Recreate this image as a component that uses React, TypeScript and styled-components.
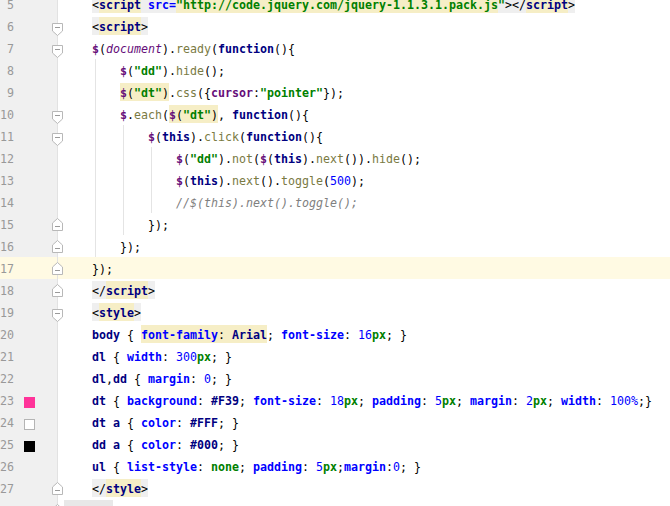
import React from 'react';
import styled, { createGlobalStyle, css } from 'styled-components';

const GlobalStyle = createGlobalStyle`
  html, body {
    margin: 0;
    padding: 0;
    background: #ffffff;
    overflow: hidden;
  }
  body {
    width: 670px;
    height: 506px;
  }
`;

type Kind =
  | 'plain'
  | 'bracket'
  | 'tag'
  | 'attr'
  | 'str'
  | 'dollar'
  | 'docVar'
  | 'method'
  | 'kw'
  | 'num'
  | 'comment'
  | 'key'
  | 'sel'
  | 'prop'
  | 'val'
  | 'unit';

type Bg = 'none' | 'gray' | 'yellow';

type Token = { t: string; k?: Kind; bg?: Bg };

type Fold = 'start' | 'end' | undefined;

type LineData = {
  n: number;
  tokens: Token[];
  fold?: Fold;
  swatch?: string;
  guides?: number[];
  active?: boolean;
};

const kindStyles: Record<Kind, ReturnType<typeof css>> = {
  plain: css`color: #000000;`,
  bracket: css`color: #000000;`,
  tag: css`color: #000080; font-weight: bold;`,
  attr: css`color: #0000ff; font-weight: bold;`,
  str: css`color: #008000; font-weight: bold;`,
  dollar: css`color: #660e7a; font-weight: bold;`,
  docVar: css`color: #660e7a; font-style: italic;`,
  method: css`color: #7a7a43;`,
  kw: css`color: #000080; font-weight: bold;`,
  num: css`color: #0000ff;`,
  comment: css`color: #808080; font-style: italic;`,
  key: css`color: #660e7a; font-weight: bold;`,
  sel: css`color: #000080; font-weight: bold;`,
  prop: css`color: #0000ff; font-weight: bold;`,
  val: css`color: #000080; font-weight: bold;`,
  unit: css`color: #008000; font-weight: bold;`,
};

const bgColors: Record<Bg, string> = {
  none: 'transparent',
  gray: '#efefef',
  yellow: '#f6eec6',
};

const Editor = styled.div`
  display: flex;
  flex-direction: column;
  margin-top: -7px;
  font-family: 'DejaVu Sans Mono', 'Liberation Mono', monospace;
  font-size: 11.63px;
`;

const Row = styled.div<{ $active?: boolean }>`
  display: flex;
  height: 22px;
  background: ${(p) => (p.$active ? '#fffae3' : 'transparent')};
`;

const Gutter = styled.div<{ $active?: boolean }>`
  display: flex;
  align-items: flex-start;
  width: 52px;
  flex-shrink: 0;
  background: ${(p) => (p.$active ? 'transparent' : '#f0f0f0')};
`;

const LineNo = styled.span`
  width: 14px;
  padding-top: 2px;
  line-height: 20px;
  text-align: right;
  color: #999999;
`;

const Swatch = styled.span<{ $color: string }>`
  width: 9px;
  height: 9px;
  margin-left: 10px;
  margin-top: 8px;
  background: ${(p) => p.$color};
  border: 1px solid ${(p) => (p.$color === '#ffffff' ? '#b4b4b4' : p.$color)};
`;

const FoldSlot = styled.div<{ $active?: boolean }>`
  width: 11px;
  flex-shrink: 0;
  background: ${(p) =>
    p.$active
      ? 'linear-gradient(to right, transparent 5px, #e2e2e2 5px, #e2e2e2 6px, transparent 6px)'
      : 'linear-gradient(to right, #f0f0f0 5px, #e2e2e2 5px, #e2e2e2 6px, #ffffff 6px)'};
`;

const FoldIcon = styled.svg<{ $end?: boolean }>`
  display: block;
  margin-top: ${(p) => (p.$end ? '5px' : '8px')};
`;

const Code = styled.div`
  position: relative;
  flex: 1;
  padding-left: 29px;
  padding-top: 2px;
  line-height: 20px;
  white-space: pre;
`;

const Guide = styled.span`
  position: absolute;
  top: 0;
  bottom: 0;
  width: 1px;
  background: #e4e4e4;
`;

const Tok = styled.span<{ $kind: Kind; $bg: Bg }>`
  ${(p) => kindStyles[p.$kind]}
  ${(p) =>
    p.$bg !== 'none' &&
    css`
      background: ${bgColors[p.$bg]};
      padding: 3px 0 1px;
    `}
`;

const ScrollThumb = styled.div`
  position: fixed;
  left: 64px;
  bottom: 0;
  width: 49px;
  height: 6px;
  background: #e8e8e8;
`;

const G: Bg = 'gray';
const Y: Bg = 'yellow';

const lines: LineData[] = [
  {
    n: 5,
    tokens: [
      { t: '<', k: 'bracket', bg: G },
      { t: 'script', k: 'tag', bg: Y },
      { t: ' ', bg: G },
      { t: 'src', k: 'attr', bg: G },
      { t: '=', k: 'attr', bg: G },
      { t: '"http://code.jquery.com/jquery-1.1.3.1.pack.js', k: 'str', bg: Y },
      { t: '"', k: 'str', bg: G },
      { t: '></', k: 'bracket', bg: G },
      { t: 'script', k: 'tag', bg: Y },
      { t: '>', k: 'bracket', bg: G },
    ],
  },
  {
    n: 6,
    fold: 'start',
    tokens: [
      { t: '<', k: 'bracket', bg: G },
      { t: 'script', k: 'tag', bg: Y },
      { t: '>', k: 'bracket', bg: G },
    ],
  },
  {
    n: 7,
    fold: 'start',
    tokens: [
      { t: '$', k: 'dollar' },
      { t: '(' },
      { t: 'document', k: 'docVar' },
      { t: ').' },
      { t: 'ready', k: 'method' },
      { t: '(' },
      { t: 'function', k: 'kw' },
      { t: '(){' },
    ],
  },
  {
    n: 8,
    guides: [0],
    tokens: [
      { t: '    ' },
      { t: '$', k: 'dollar' },
      { t: '(' },
      { t: '"dd"', k: 'str' },
      { t: ').' },
      { t: 'hide', k: 'method' },
      { t: '();' },
    ],
  },
  {
    n: 9,
    guides: [0],
    tokens: [
      { t: '    ' },
      { t: '$', k: 'dollar', bg: Y },
      { t: '(', bg: Y },
      { t: '"dt"', k: 'str', bg: Y },
      { t: ')', bg: Y },
      { t: '.' },
      { t: 'css', k: 'method' },
      { t: '({' },
      { t: 'cursor', k: 'key' },
      { t: ':' },
      { t: '"pointer"', k: 'str' },
      { t: '});' },
    ],
  },
  {
    n: 10,
    fold: 'start',
    guides: [0],
    tokens: [
      { t: '    ' },
      { t: '$', k: 'dollar' },
      { t: '.' },
      { t: 'each', k: 'method' },
      { t: '(' },
      { t: '$', k: 'dollar', bg: Y },
      { t: '(', bg: Y },
      { t: '"dt"', k: 'str', bg: Y },
      { t: ')', bg: Y },
      { t: ', ' },
      { t: 'function', k: 'kw' },
      { t: '(){' },
    ],
  },
  {
    n: 11,
    fold: 'start',
    guides: [0, 4],
    tokens: [
      { t: '        ' },
      { t: '$', k: 'dollar' },
      { t: '(' },
      { t: 'this', k: 'kw' },
      { t: ').' },
      { t: 'click', k: 'method' },
      { t: '(' },
      { t: 'function', k: 'kw' },
      { t: '(){' },
    ],
  },
  {
    n: 12,
    guides: [0, 4, 8],
    tokens: [
      { t: '            ' },
      { t: '$', k: 'dollar' },
      { t: '(' },
      { t: '"dd"', k: 'str' },
      { t: ').' },
      { t: 'not', k: 'method' },
      { t: '(' },
      { t: '$', k: 'dollar' },
      { t: '(' },
      { t: 'this', k: 'kw' },
      { t: ').' },
      { t: 'next', k: 'method' },
      { t: '()).' },
      { t: 'hide', k: 'method' },
      { t: '();' },
    ],
  },
  {
    n: 13,
    guides: [0, 4, 8],
    tokens: [
      { t: '            ' },
      { t: '$', k: 'dollar' },
      { t: '(' },
      { t: 'this', k: 'kw' },
      { t: ').' },
      { t: 'next', k: 'method' },
      { t: '().' },
      { t: 'toggle', k: 'method' },
      { t: '(' },
      { t: '500', k: 'num' },
      { t: ');' },
    ],
  },
  {
    n: 14,
    guides: [0, 4, 8],
    tokens: [{ t: '            ' }, { t: '//$(this).next().toggle();', k: 'comment' }],
  },
  {
    n: 15,
    fold: 'end',
    guides: [0, 4],
    tokens: [{ t: '        });' }],
  },
  {
    n: 16,
    fold: 'end',
    guides: [0],
    tokens: [{ t: '    });' }],
  },
  {
    n: 17,
    fold: 'end',
    active: true,
    tokens: [{ t: '});' }],
  },
  {
    n: 18,
    fold: 'end',
    tokens: [
      { t: '</', k: 'bracket', bg: G },
      { t: 'script', k: 'tag', bg: Y },
      { t: '>', k: 'bracket', bg: G },
    ],
  },
  {
    n: 19,
    fold: 'start',
    tokens: [
      { t: '<', k: 'bracket', bg: G },
      { t: 'style', k: 'tag', bg: Y },
      { t: '>', k: 'bracket', bg: G },
    ],
  },
  {
    n: 20,
    tokens: [
      { t: 'body', k: 'sel' },
      { t: ' { ' },
      { t: 'font-family', k: 'prop', bg: Y },
      { t: ': ', bg: Y },
      { t: 'Arial', k: 'val', bg: Y },
      { t: '; ' },
      { t: 'font-size', k: 'prop' },
      { t: ': ' },
      { t: '16', k: 'num' },
      { t: 'px', k: 'unit' },
      { t: '; }' },
    ],
  },
  {
    n: 21,
    tokens: [
      { t: 'dl', k: 'sel' },
      { t: ' { ' },
      { t: 'width', k: 'prop' },
      { t: ': ' },
      { t: '300', k: 'num' },
      { t: 'px', k: 'unit' },
      { t: '; }' },
    ],
  },
  {
    n: 22,
    tokens: [
      { t: 'dl', k: 'sel' },
      { t: ',' },
      { t: 'dd', k: 'sel' },
      { t: ' { ' },
      { t: 'margin', k: 'prop' },
      { t: ': ' },
      { t: '0', k: 'num' },
      { t: '; }' },
    ],
  },
  {
    n: 23,
    swatch: '#ff3399',
    tokens: [
      { t: 'dt', k: 'sel' },
      { t: ' { ' },
      { t: 'background', k: 'prop' },
      { t: ': ' },
      { t: '#F39', k: 'val' },
      { t: '; ' },
      { t: 'font-size', k: 'prop' },
      { t: ': ' },
      { t: '18', k: 'num' },
      { t: 'px', k: 'unit' },
      { t: '; ' },
      { t: 'padding', k: 'prop' },
      { t: ': ' },
      { t: '5', k: 'num' },
      { t: 'px', k: 'unit' },
      { t: '; ' },
      { t: 'margin', k: 'prop' },
      { t: ': ' },
      { t: '2', k: 'num' },
      { t: 'px', k: 'unit' },
      { t: '; ' },
      { t: 'width', k: 'prop' },
      { t: ': ' },
      { t: '100%', k: 'num' },
      { t: ';}' },
    ],
  },
  {
    n: 24,
    swatch: '#ffffff',
    tokens: [
      { t: 'dt', k: 'sel' },
      { t: ' ' },
      { t: 'a', k: 'sel' },
      { t: ' { ' },
      { t: 'color', k: 'prop' },
      { t: ': ' },
      { t: '#FFF', k: 'val' },
      { t: '; }' },
    ],
  },
  {
    n: 25,
    swatch: '#000000',
    tokens: [
      { t: 'dd', k: 'sel' },
      { t: ' ' },
      { t: 'a', k: 'sel' },
      { t: ' { ' },
      { t: 'color', k: 'prop' },
      { t: ': ' },
      { t: '#000', k: 'val' },
      { t: '; }' },
    ],
  },
  {
    n: 26,
    tokens: [
      { t: 'ul', k: 'sel' },
      { t: ' { ' },
      { t: 'list-style', k: 'prop' },
      { t: ': ' },
      { t: 'none', k: 'unit' },
      { t: '; ' },
      { t: 'padding', k: 'prop' },
      { t: ': ' },
      { t: '5', k: 'num' },
      { t: 'px', k: 'unit' },
      { t: ';' },
      { t: 'margin', k: 'prop' },
      { t: ':' },
      { t: '0', k: 'num' },
      { t: '; }' },
    ],
  },
  {
    n: 27,
    fold: 'end',
    tokens: [
      { t: '</', k: 'bracket', bg: G },
      { t: 'style', k: 'tag', bg: Y },
      { t: '>', k: 'bracket', bg: G },
    ],
  },
  {
    n: 28,
    fold: 'end',
    tokens: [],
  },
];

const FoldMarker = ({ type }: { type: 'start' | 'end' }) => {
  const end = type === 'end';
  return (
    <FoldIcon $end={end} width="11" height="13" viewBox="0 0 11 13">
      <path
        d={end ? 'M0.5 12.5 H10.5 V5 L5.5 0.5 L0.5 5 Z' : 'M0.5 0.5 H10.5 V8 L5.5 12.5 L0.5 8 Z'}
        fill="#ffffff"
        stroke="#b8b8b8"
      />
      <path d={end ? 'M3 8.5 H8' : 'M3 4.5 H8'} stroke="#9a9a9a" />
    </FoldIcon>
  );
};

const CodeLine = ({ line }: { line: LineData }) => (
  <Row $active={line.active}>
    <Gutter $active={line.active}>
      <LineNo>{line.n}</LineNo>
      {line.swatch && <Swatch $color={line.swatch} />}
    </Gutter>
    <FoldSlot $active={line.active}>{line.fold && <FoldMarker type={line.fold} />}</FoldSlot>
    <Code>
      {line.guides?.map((col) => (
        <Guide key={col} style={{ left: 32 + col * 7 }} />
      ))}
      {line.tokens.map((tok, i) => (
        <Tok key={i} $kind={tok.k ?? 'plain'} $bg={tok.bg ?? 'none'}>
          {tok.t}
        </Tok>
      ))}
    </Code>
  </Row>
);

const App = () => (
  <>
    <GlobalStyle />
    <Editor>
      {lines.map((line) => (
        <CodeLine key={line.n} line={line} />
      ))}
    </Editor>
    <ScrollThumb />
  </>
);

export default App;
